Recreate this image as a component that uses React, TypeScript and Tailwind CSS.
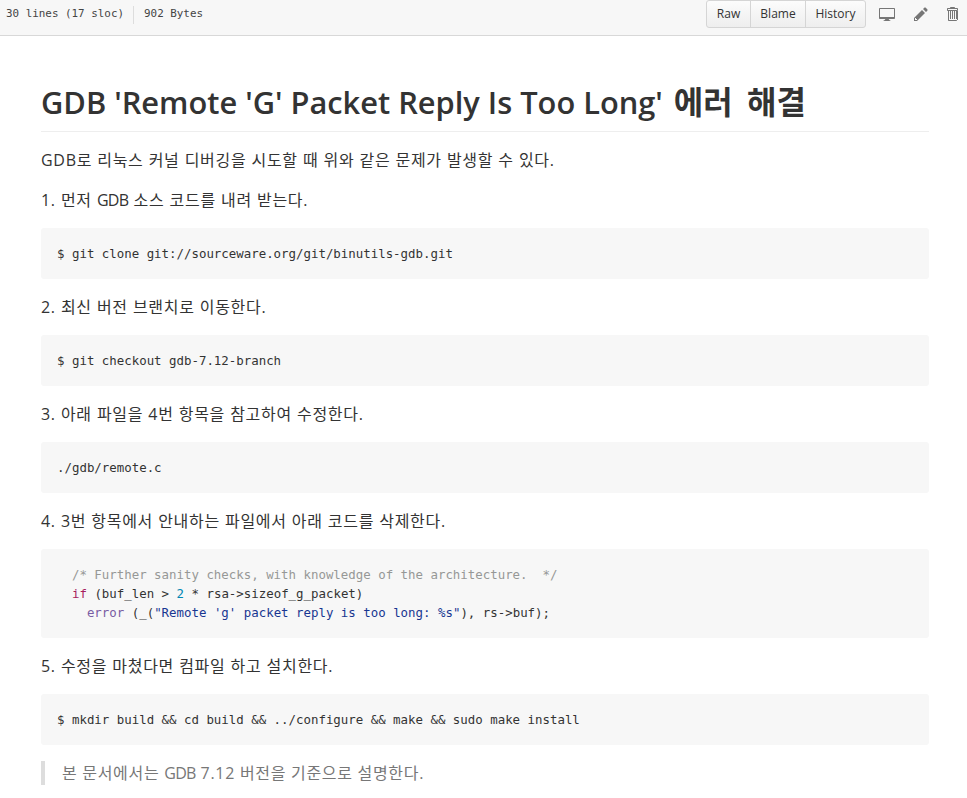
const mono = "font-['DejaVu_Sans_Mono',monospace]";

function Code({ children }: { children: React.ReactNode }) {
  return (
    <pre className="mb-4 rounded-[3px] bg-[#f7f7f7] p-4 font-['DejaVu_Sans_Mono',monospace] text-[12.42px] leading-[19px] text-[#333]">
      {children}
    </pre>
  );
}

function P({ children }: { children: React.ReactNode }) {
  return <p className="mb-4 leading-6 tracking-[0.7px] [word-spacing:0.3px]">{children}</p>;
}

function Gdb() {
  return <span className="tracking-[-0.7px]">GDB</span>;
}

export default function App() {
  return (
    <div className="h-[798px] overflow-hidden bg-white font-['Open_Sans','Noto_Sans_CJK_KR',sans-serif] text-[16px] text-[#333]">
      <div className="flex h-[36px] items-start justify-between border-b border-[#d8d8d8] bg-[#f7f7f7] pl-[6px] pr-[101px]">
        <div className={`flex h-[29px] items-center text-[10.9px] text-[#444] ${mono}`}>
          <span className="pr-[4px]">30 lines (17 sloc)</span>
          <span className="mx-[5px] h-[18px] w-px bg-[#ddd]" />
          <span className="pl-[5px]">902 Bytes</span>
        </div>
        <div className="relative flex h-[28px] items-stretch rounded-[3px] border border-[#d5d5d5] bg-gradient-to-b from-[#fcfcfc] to-[#eee] text-[12px] font-medium text-[#333]">
          <span className="flex w-[44px] items-center justify-center border-r border-[#d5d5d5]">Raw</span>
          <span className="flex w-[55px] items-center justify-center border-r border-[#d5d5d5]">Blame</span>
          <span className="flex w-[59px] items-center justify-center">History</span>
          <div className="absolute left-[172px] top-[5px] flex items-center text-[#767676]">
            <svg width="16" height="16" viewBox="0 0 16 16" fill="currentColor"><path d="M15 2H1c-.55 0-1 .45-1 1v9c0 .55.45 1 1 1h5.34c-.25.61-.86 1.39-2.34 2h8c-1.48-.61-2.09-1.39-2.34-2H15c.55 0 1-.45 1-1V3c0-.55-.45-1-1-1zm0 9H1V3h14v8z" /></svg>
            <svg className="ml-[19px]" width="14" height="16" viewBox="0 0 14 16" fill="currentColor"><path d="M0 12v3h3l8-8-3-3-8 8zm3 2H1v-2h1v1h1v1zm10.3-9.3L12 6 9 3l1.3-1.3a.996.996 0 0 1 1.41 0l1.59 1.59c.39.39.39 1.02 0 1.41z" /></svg>
            <svg className="ml-[18px]" width="12" height="16" viewBox="0 0 12 16" fill="currentColor"><path d="M11 2H9c0-.55-.45-1-1-1H5c-.55 0-1 .45-1 1H2c-.55 0-1 .45-1 1v1c0 .55.45 1 1 1v9c0 .55.45 1 1 1h7c.55 0 1-.45 1-1V5c.55 0 1-.45 1-1V3c0-.55-.45-1-1-1zm-1 12H3V5h1v8h1V5h1v8h1V5h1v8h1V5h1v8h1V5h1v9zm1-10H2V3h9v1z" /></svg>
          </div>
        </div>
      </div>
      <div className="pl-[41px] pr-[38px] pt-[45px]">
        <h1 className="mb-4 border-b border-[#eee] pb-[8px] text-[30.8px] font-semibold leading-[42px] text-[#333]">
          GDB 'Remote 'G' Packet Reply Is Too Long' <span className="ml-[3px] text-[32px] [word-spacing:6px]">에러 해결</span>
        </h1>
        <P>GDB로 리눅스 커널 디버깅을 시도할 때 위와 같은 문제가 발생할 수 있다.</P>
        <P>1. 먼저 <Gdb /> 소스 코드를 내려 받는다.</P>
        <Code>$ git clone git://sourceware.org/git/binutils-gdb.git</Code>
        <P>2. 최신 버전 브랜치로 이동한다.</P>
        <Code>$ git checkout gdb-7.12-branch</Code>
        <P>3. 아래 파일을 4번 항목을 참고하여 수정한다.</P>
        <Code>./gdb/remote.c</Code>
        <P>4. 3번 항목에서 안내하는 파일에서 아래 코드를 삭제한다.</P>
        <Code>
          <span className="text-[#969896]">{"  /* Further sanity checks, with knowledge of the architecture.  */"}</span>
          {"\n  "}
          <span className="text-[#a71d5d]">if</span>
          {" (buf_len > "}
          <span className="text-[#0086b3]">2</span>
          {" * rsa->sizeof_g_packet)\n    "}
          <span className="text-[#795da3]">error</span>
          {" (_("}
          <span className="text-[#183691]">"Remote 'g' packet reply is too long: %s"</span>
          {"), rs->buf);"}
        </Code>
        <P>5. 수정을 마쳤다면 컴파일 하고 설치한다.</P>
        <Code>$ mkdir build &amp;&amp; cd build &amp;&amp; ../configure &amp;&amp; make &amp;&amp; sudo make install</Code>
        <blockquote className="border-l-[4px] border-[#ddd] pl-[17px] leading-6 tracking-[0.7px] text-[#777]">
          본 문서에서는 <Gdb /> 7.12 버전을 기준으로 설명한다.
        </blockquote>
      </div>
    </div>
  );
}
